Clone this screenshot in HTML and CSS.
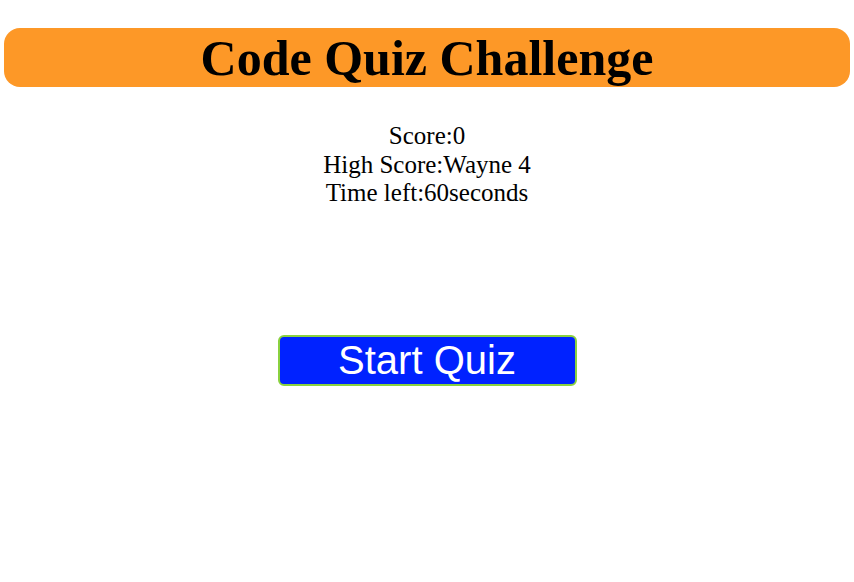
FILE: index.html
```html
<!DOCTYPE html>
<html>
<head>
<meta charset="utf-8">
<link rel="stylesheet" href="styles.css">
</head>
<body>
<header class="banner">
  <h1 class="title">Code Quiz Challenge</h1>
</header>
<section class="stats">
  <div>Score:<span>0</span></div>
  <div>High Score:<span>Wayne 4</span></div>
  <div>Time left:<span>60</span>seconds</div>
</section>
<div class="actions">
  <button class="start">Start Quiz</button>
</div>
</body>
</html>
```
FILE: styles.css
```css
html, body { margin: 0; padding: 0; background: #fff; }
body { font-family: "Liberation Serif", "Times New Roman", serif; color: #000; padding: 28px 4px 0; }
.banner { background: #fd9827; border-radius: 16px; height: 59px; display: flex; align-items: center; justify-content: center; }
.title { margin: 0; font-size: 50px; font-weight: bold; line-height: 1; }
.stats { margin-top: 35px; text-align: center; font-size: 25px; line-height: 28.5px; }
.actions { display: flex; justify-content: center; margin-top: 127px; }
.start { width: 299px; height: 51px; background: #0022ff; color: #fff; border: 2px solid #8ad13f; border-radius: 6px; font-family: "Liberation Sans", Arial, sans-serif; font-size: 40px; padding: 0; line-height: 1; }
```
